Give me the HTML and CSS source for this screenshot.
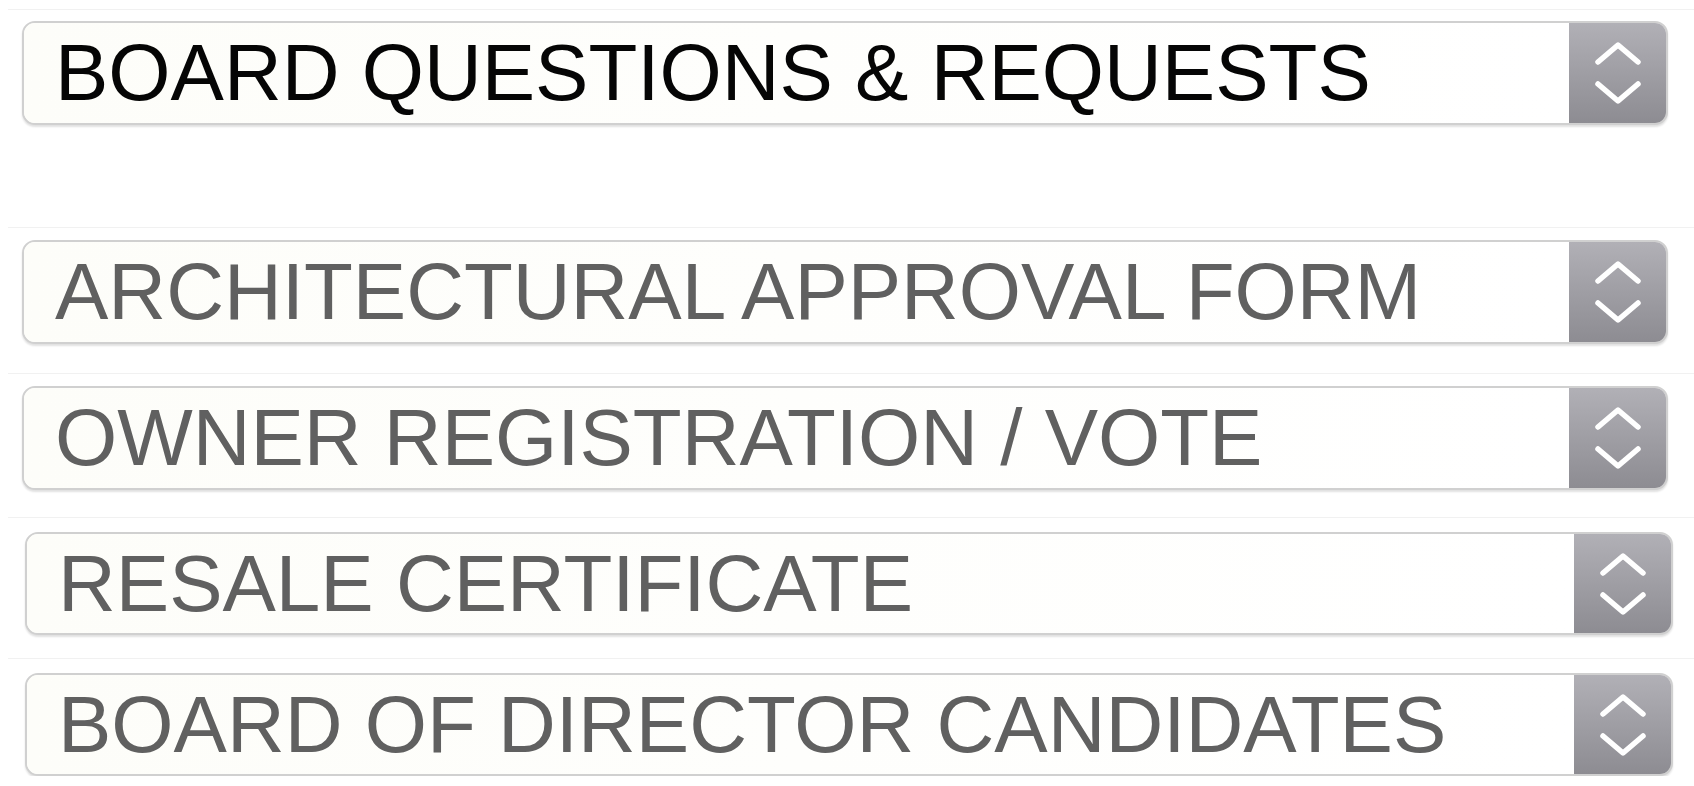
FILE: index.html
```html
<!DOCTYPE html>
<html lang="en">
<head>
<meta charset="utf-8">
<title>Forms</title>
<link rel="stylesheet" href="styles.css">
</head>
<body>
<div class="list">
  <div class="row row-1">
    <div class="sep"></div>
    <div class="select">
      <span class="label label-dark">BOARD QUESTIONS &amp; REQUESTS</span>
      <span class="spin"><svg viewBox="0 0 50 64" width="50" height="64"><path d="M5 21 L25 4 L45 21 M5 43 L25 60 L45 43" fill="none" stroke="#fff" stroke-width="5.5" stroke-linecap="round" stroke-linejoin="round"/></svg></span>
    </div>
  </div>
  <div class="row row-2">
    <div class="sep"></div>
    <div class="select">
      <span class="label">ARCHITECTURAL APPROVAL FORM</span>
      <span class="spin"><svg viewBox="0 0 50 64" width="50" height="64"><path d="M5 21 L25 4 L45 21 M5 43 L25 60 L45 43" fill="none" stroke="#fff" stroke-width="5.5" stroke-linecap="round" stroke-linejoin="round"/></svg></span>
    </div>
  </div>
  <div class="row row-3">
    <div class="sep"></div>
    <div class="select">
      <span class="label">OWNER REGISTRATION / VOTE</span>
      <span class="spin"><svg viewBox="0 0 50 64" width="50" height="64"><path d="M5 21 L25 4 L45 21 M5 43 L25 60 L45 43" fill="none" stroke="#fff" stroke-width="5.5" stroke-linecap="round" stroke-linejoin="round"/></svg></span>
    </div>
  </div>
  <div class="row row-shift row-4">
    <div class="sep"></div>
    <div class="select">
      <span class="label">RESALE CERTIFICATE</span>
      <span class="spin"><svg viewBox="0 0 50 64" width="50" height="64"><path d="M5 21 L25 4 L45 21 M5 43 L25 60 L45 43" fill="none" stroke="#fff" stroke-width="5.5" stroke-linecap="round" stroke-linejoin="round"/></svg></span>
    </div>
  </div>
  <div class="row row-shift row-5">
    <div class="sep"></div>
    <div class="select">
      <span class="label">BOARD OF DIRECTOR CANDIDATES</span>
      <span class="spin"><svg viewBox="0 0 50 64" width="50" height="64"><path d="M5 21 L25 4 L45 21 M5 43 L25 60 L45 43" fill="none" stroke="#fff" stroke-width="5.5" stroke-linecap="round" stroke-linejoin="round"/></svg></span>
    </div>
  </div>
</div>
</body>
</html>
```
FILE: styles.css
```css
html, body {
  margin: 0;
  padding: 0;
  background: #ffffff;
}
body {
  font-family: "Liberation Sans", Arial, Helvetica, sans-serif;
  overflow: hidden;
}
.list {
  display: flex;
  flex-direction: column;
  padding-top: 9px;
}
.row {
  display: flex;
  flex-direction: column;
  gap: 11px;
  padding-right: 26px;
}
.row-1 {
  margin-bottom: 102px;
}
.row-2 {
  gap: 12px;
  margin-bottom: 29px;
}
.row-3 {
  gap: 12px;
  margin-bottom: 27px;
}
.row-4 {
  margin-bottom: 23px;
}
.row-shift {
  gap: 14px;
  padding-left: 3px;
  padding-right: 21px;
}
.row-shift .select {
  height: 103px;
}
.row-shift .sep {
  margin-left: 5px;
}
.sep {
  height: 1px;
  background: #f1f1f1;
  margin-left: 8px;
  margin-right: -26px;
}
.select {
  margin-left: 22px;
  height: 104px;
  box-sizing: border-box;
  border: 2px solid #d0d0d0;
  border-radius: 13px;
  box-shadow: 0 2px 2px rgba(0, 0, 0, 0.12);
  background: #fdfdfa;
  display: flex;
  align-items: stretch;
  overflow: hidden;
}
.label {
  flex: 1;
  display: flex;
  align-items: center;
  padding-left: 31px;
  font-size: 80px;
  line-height: 1;
  color: #606060;
  white-space: nowrap;
  background: linear-gradient(to right, #fdfdf9, #ffffff);
}
.label-dark {
  color: #050505;
}
.spin {
  width: 97px;
  flex: none;
  display: flex;
  align-items: center;
  justify-content: center;
  background: linear-gradient(to bottom, #b1b0b6, #8d8c92);
}
.spin svg {
  display: block;
}
```
